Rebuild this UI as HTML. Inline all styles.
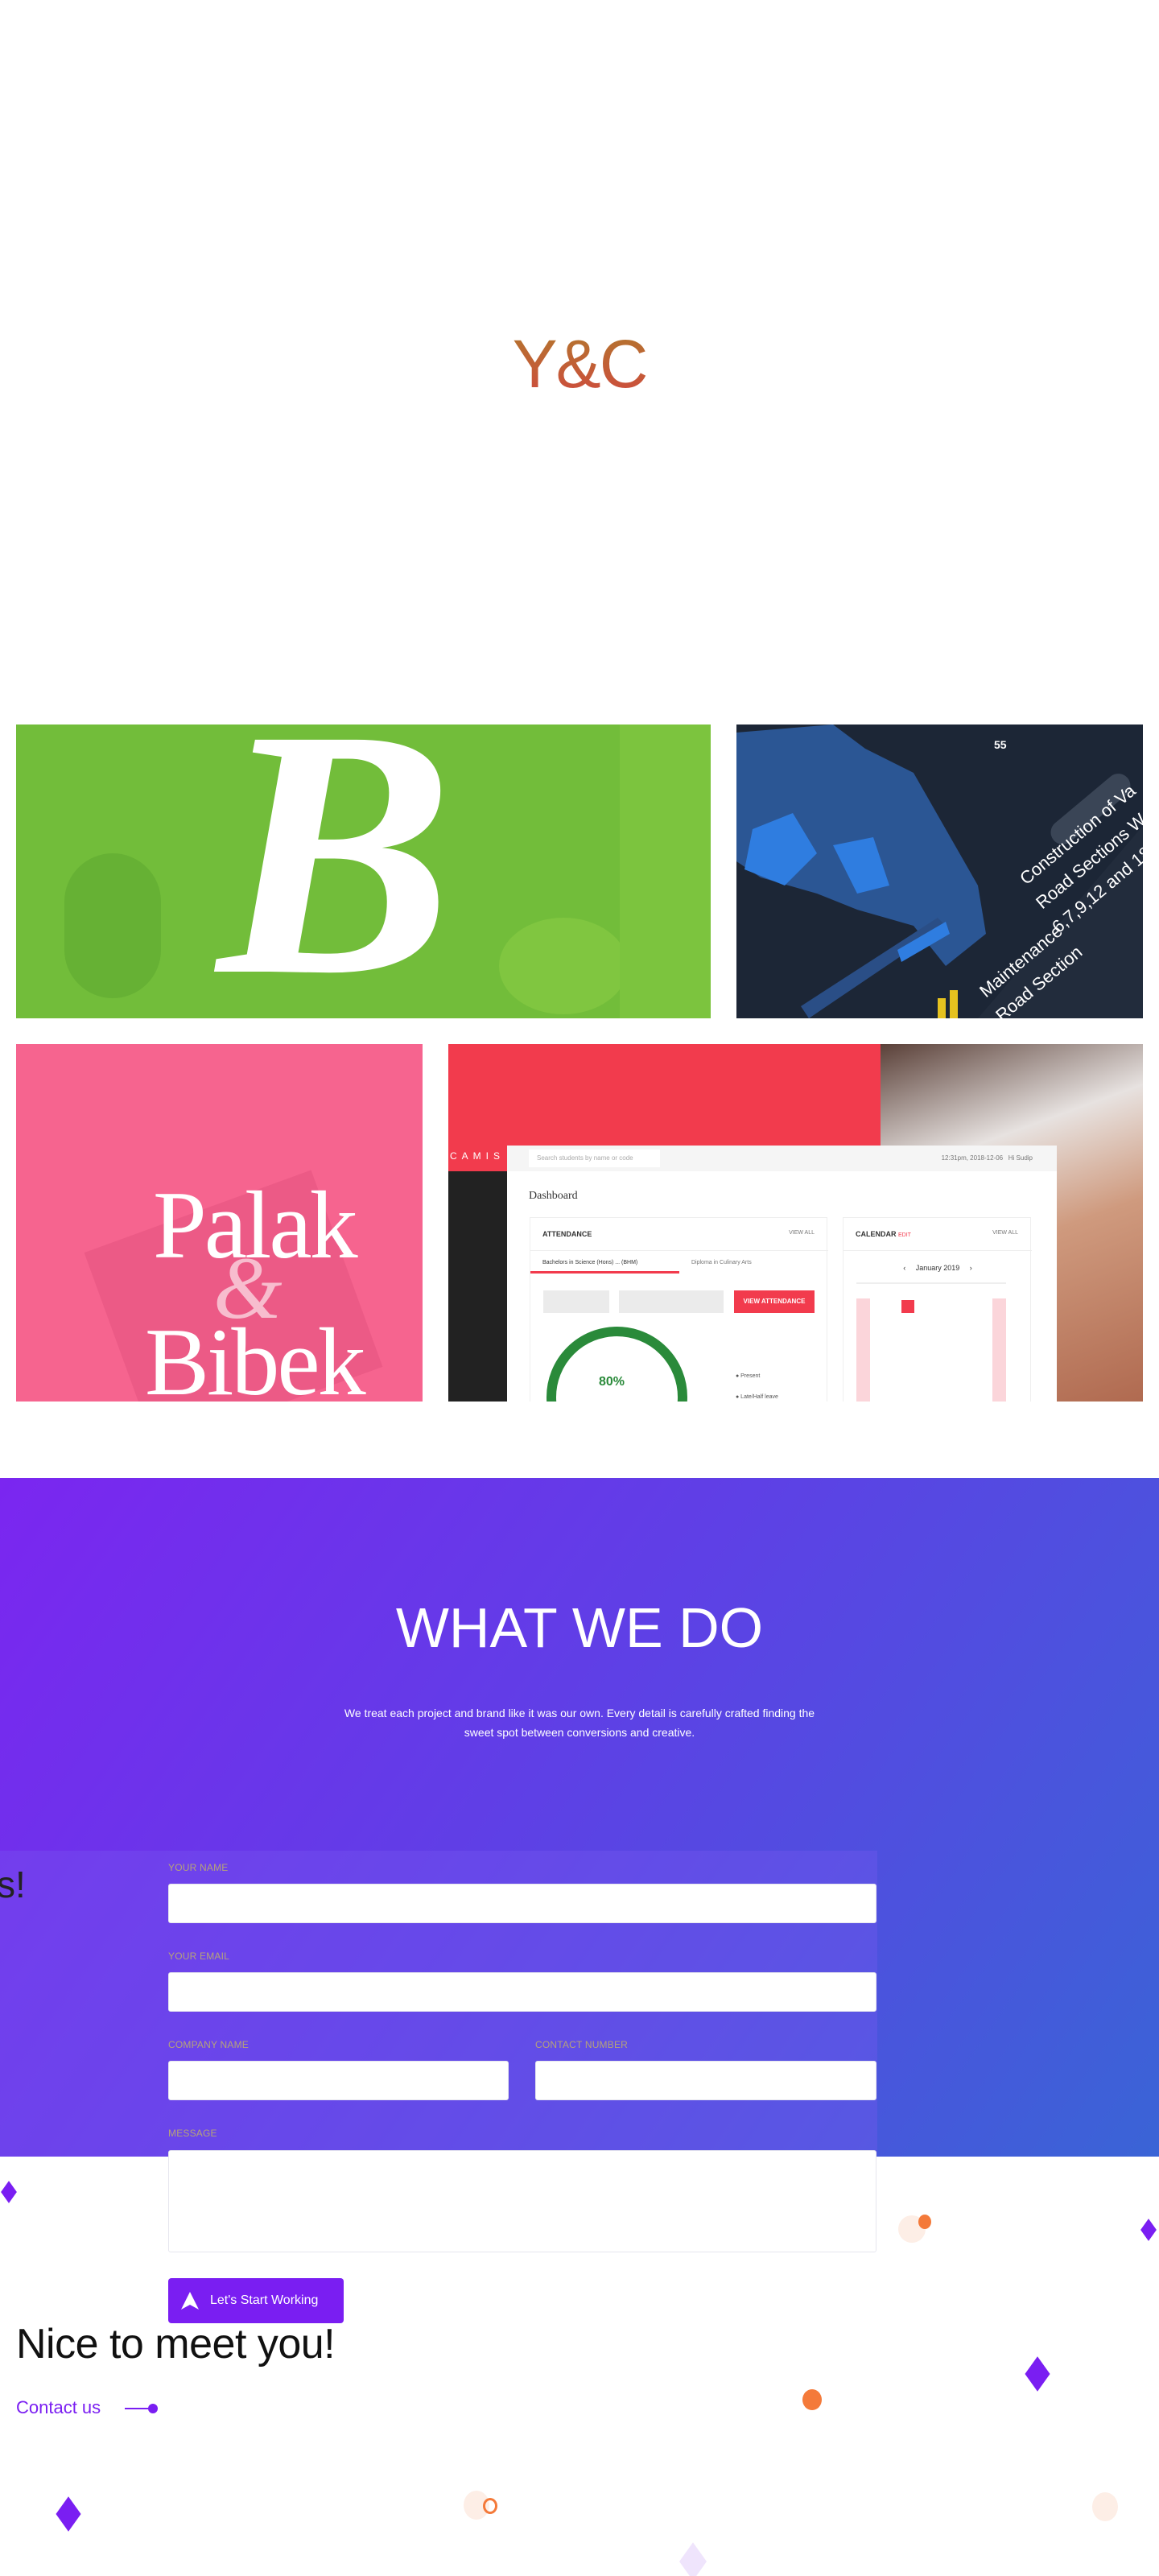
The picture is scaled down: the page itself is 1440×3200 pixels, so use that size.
<!DOCTYPE html>
<html><head><meta charset="utf-8">
<style>
*{margin:0;padding:0;box-sizing:border-box}
html,body{width:1440px;height:3200px;overflow:hidden;background:#fff;font-family:"Liberation Sans",sans-serif;position:relative}
.abs{position:absolute}
.logo{position:absolute;left:0;width:1440px;top:402px;text-align:center;font-size:84px;font-weight:300;letter-spacing:-2px;background:linear-gradient(#b07a2c,#d1473f);-webkit-background-clip:text;background-clip:text;color:transparent;line-height:100px}
.purple{position:absolute;left:0;top:1836px;width:1440px;height:843px;background:linear-gradient(125deg,#7b26f0 0%,#5f3fe6 45%,#3a64d6 100%)}
.lbl{position:absolute;font-size:12px;color:#b6a37a;letter-spacing:.2px}
.inp{position:absolute;background:#fff;border-radius:3px;border:1px solid #e6e6ee}
.dia{position:absolute;background:#7a1ef2;transform:scaleY(1.4) rotate(45deg)}
.dot{position:absolute;border-radius:50%}
</style></head><body>
<div class="logo">Y&amp;C</div>

<div class="abs" style="left:20px;top:900px;width:863px;height:365px;background:#72bd3a;overflow:hidden">
 <div class="abs" style="left:60px;top:160px;width:120px;height:180px;border-radius:60px;background:#66b134"></div>
 <div class="abs" style="left:600px;top:240px;width:160px;height:120px;border-radius:50%;background:#80c640"></div>
 <div class="abs" style="left:750px;top:0;width:113px;height:365px;background:#7cc43e"></div>
 <div class="abs" style="left:250px;top:-60px;font-family:'Liberation Serif',serif;font-style:italic;font-weight:bold;font-size:440px;color:#fff;line-height:440px">B</div>
</div>
<div class="abs" style="left:915px;top:900px;width:505px;height:365px;background:#1c2636;overflow:hidden">
 <svg width="505" height="365" class="abs" style="left:0;top:0">
  <polygon points="0,10 120,0 160,30 220,60 260,130 300,200 310,260 260,300 220,250 150,230 100,210 30,190 0,170" fill="#2b5694"/>
  <polygon points="20,130 70,110 100,160 60,200 10,180" fill="#2f7de0"/>
  <polygon points="120,150 170,140 190,200 150,210" fill="#2f7de0"/>
  <polygon points="80,350 250,240 260,250 90,365" fill="#2a4e86"/>
  <polygon points="200,280 260,245 265,260 205,295" fill="#2f7de0"/>
  <polygon points="300,365 510,120 510,365" fill="#222c3c"/>
  <rect x="380" y="90" width="120" height="30" rx="15" fill="#3a4556" transform="rotate(-40 440 105)"/>
  <text x="360" y="200" fill="#fff" font-size="22" font-family="Liberation Sans" transform="rotate(-40 360 200)">Construction of Va</text>
  <text x="380" y="230" fill="#fff" font-size="22" font-family="Liberation Sans" transform="rotate(-40 380 230)">Road Sections W</text>
  <text x="400" y="260" fill="#fff" font-size="22" font-family="Liberation Sans" transform="rotate(-40 400 260)">6,7,9,12 and 18</text>
  <text x="310" y="340" fill="#fff" font-size="22" font-family="Liberation Sans" transform="rotate(-40 310 340)">Maintenance</text>
  <text x="330" y="370" fill="#fff" font-size="22" font-family="Liberation Sans" transform="rotate(-40 330 370)">Road Section</text>
  <rect x="250" y="340" width="10" height="30" fill="#e6c21f"/><rect x="265" y="330" width="10" height="40" fill="#e6c21f"/>
  <text x="320" y="30" fill="#fff" font-size="14" font-family="Liberation Sans" font-weight="bold">55</text>
 </svg>
</div>
<div class="abs" style="left:20px;top:1297px;width:505px;height:444px;background:#f6648f;overflow:hidden">
 <div class="abs" style="left:120px;top:200px;width:300px;height:260px;background:#ec5a86;transform:rotate(-20deg)"></div>
 <div class="abs" style="left:170px;top:160px;font-family:'Liberation Serif',serif;font-size:120px;color:#fff;line-height:130px;letter-spacing:-3px">Palak</div>
 <div class="abs" style="left:245px;top:240px;font-family:'Liberation Serif',serif;font-style:italic;font-size:110px;color:rgba(255,255,255,.6)">&amp;</div>
 <div class="abs" style="left:160px;top:330px;font-family:'Liberation Serif',serif;font-size:120px;color:#fff;line-height:130px;letter-spacing:-3px">Bibek</div>
</div>
<div class="abs" style="left:557px;top:1297px;width:863px;height:444px;background:#f23b4d;overflow:hidden">
 <div class="abs" style="left:537px;top:0;width:326px;height:444px;background:linear-gradient(160deg,#5a4038 0%,#e7e2e0 30%,#cf9a7e 55%,#b06a50 100%)"></div>
 <div class="abs" style="left:0;top:158px;width:73px;height:286px;background:#222"></div>
 <div class="abs" style="left:2px;top:132px;color:#fff;font-size:12px;letter-spacing:6px">CAMIS</div>
 <div class="abs" style="left:73px;top:126px;width:683px;height:330px;background:#fff">
  <div style="height:32px;background:#f5f5f5;position:relative">
   <div class="abs" style="left:27px;top:5px;width:163px;height:22px;background:#fff;font-size:8px;color:#aaa;padding:6px 10px">Search students by name or code</div>
   <div class="abs" style="right:30px;top:11px;font-size:8px;color:#777">12:31pm, 2018-12-06 &nbsp; Hi Sudip</div>
  </div>
  <div class="abs" style="left:27px;top:55px;font-family:'Liberation Serif',serif;font-size:14px;color:#333">Dashboard</div>
  <div class="abs" style="left:28px;top:89px;width:370px;height:260px;border:1px solid #eee">
   <div class="abs" style="left:15px;top:15px;font-size:9px;font-weight:bold;color:#333">ATTENDANCE</div>
   <div class="abs" style="right:15px;top:15px;font-size:7px;color:#777">VIEW ALL</div>
   <div class="abs" style="left:0;top:40px;width:370px;border-top:1px solid #eee"></div>
   <div class="abs" style="left:15px;top:52px;font-size:7px;color:#333">Bachelors in Science (Hons) ... (BHM)</div>
   <div class="abs" style="left:200px;top:52px;font-size:7px;color:#777">Diploma in Culinary Arts</div>
   <div class="abs" style="left:0;top:66px;width:185px;height:3px;background:#f23b4d"></div>
   <div class="abs" style="left:16px;top:90px;width:82px;height:28px;background:#ebebeb"></div>
   <div class="abs" style="left:110px;top:90px;width:130px;height:28px;background:#ebebeb"></div>
   <div class="abs" style="left:253px;top:90px;width:100px;height:28px;background:#f23b4d;color:#fff;font-size:8px;font-weight:bold;text-align:center;line-height:28px">VIEW ATTENDANCE</div>
   <div class="abs" style="left:20px;top:135px;width:175px;height:175px;border:12px solid #2a8a3a;border-radius:50%"></div>
   <div class="abs" style="left:85px;top:195px;font-size:16px;font-weight:bold;color:#2a8a3a">80%</div>
   <div class="abs" style="left:255px;top:193px;font-size:7px;color:#555">● Present</div>
   <div class="abs" style="left:255px;top:219px;font-size:7px;color:#555">● Late/Half leave</div>
  </div>
  <div class="abs" style="left:417px;top:89px;width:234px;height:260px;border:1px solid #eee">
   <div class="abs" style="left:15px;top:15px;font-size:9px;font-weight:bold;color:#333">CALENDAR <span style="color:#f23b4d;font-weight:normal;font-size:7px">EDIT</span></div>
   <div class="abs" style="right:15px;top:15px;font-size:7px;color:#777">VIEW ALL</div>
   <div class="abs" style="left:0;top:40px;width:234px;border-top:1px solid #eee"></div>
   <div class="abs" style="left:0;width:234px;top:57px;text-align:center;font-size:9px;color:#333">‹ &nbsp;&nbsp;&nbsp; January 2019 &nbsp;&nbsp;&nbsp; ›</div>
   <div class="abs" style="left:16px;top:100px;width:17px;height:170px;background:#fbd5da"></div>
   <div class="abs" style="left:185px;top:100px;width:17px;height:170px;background:#fbd5da"></div>
   <div class="abs" style="left:72px;top:102px;width:16px;height:16px;background:#f23b4d"></div>
   <div class="abs" style="left:16px;top:80px;width:186px;border-top:2px solid #eee"></div>
  </div>
 </div>
</div>

<div class="purple"></div>
<div class="abs" style="left:0;width:1440px;top:1982px;text-align:center;color:#fff;font-size:70px;font-weight:300;letter-spacing:0;line-height:80px">WHAT WE DO</div>
<div class="abs" style="left:370px;width:700px;top:2116px;text-align:center;color:#fff;font-size:14px;line-height:24px">We treat each project and brand like it was our own. Every detail is carefully crafted finding the<br>sweet spot between conversions and creative.</div>

<div class="abs" style="left:0;top:2299px;width:1090px;height:380px;background:rgba(120,90,240,.35)"></div>
<div class="abs" style="left:-4px;top:2314px;font-size:46px;color:#222;font-weight:300">s!</div>

<div class="lbl" style="left:209px;top:2313px">YOUR NAME</div>
<div class="inp" style="left:209px;top:2340px;width:880px;height:49px"></div>
<div class="lbl" style="left:209px;top:2423px">YOUR EMAIL</div>
<div class="inp" style="left:209px;top:2450px;width:880px;height:49px"></div>
<div class="lbl" style="left:209px;top:2533px">COMPANY NAME</div>
<div class="inp" style="left:209px;top:2560px;width:423px;height:49px"></div>
<div class="lbl" style="left:665px;top:2533px">CONTACT NUMBER</div>
<div class="inp" style="left:665px;top:2560px;width:424px;height:49px"></div>
<div class="lbl" style="left:209px;top:2643px">MESSAGE</div>
<div class="inp" style="left:209px;top:2671px;width:880px;height:127px"></div>
<div class="abs" style="left:209px;top:2830px;width:218px;height:56px;background:#7a1ef2;border-radius:4px;color:#fff;font-size:16px;line-height:56px;padding-left:52px">Let's Start Working</div>
<svg class="abs" style="left:223px;top:2845px" width="26" height="26"><polygon points="13,2 24,24 13,18 2,24" fill="#fff"/></svg>

<div class="abs" style="left:20px;top:2882px;font-size:52px;color:#111;font-weight:300;line-height:60px;letter-spacing:-.5px">Nice to meet you!</div>
<div class="abs" style="left:20px;top:2978px;font-size:22px;color:#7a1ef2">Contact us</div>
<div class="abs" style="left:155px;top:2991px;width:35px;height:2px;background:#7a1ef2"></div>
<div class="dot" style="left:184px;top:2986px;width:12px;height:12px;background:#7a1ef2"></div>

<div class="dia" style="left:4px;top:2716px;width:14px;height:14px"></div>
<div class="dia" style="left:1420px;top:2763px;width:14px;height:14px"></div>
<div class="dia" style="left:1278px;top:2938px;width:22px;height:22px"></div>
<div class="dia" style="left:74px;top:3112px;width:22px;height:22px"></div>
<div class="dia" style="left:849px;top:3170px;width:24px;height:24px;background:#efe4fc"></div>
<div class="dot" style="left:1116px;top:2752px;width:34px;height:34px;background:#fdeee6"></div>
<div class="dot" style="left:1141px;top:2751px;width:16px;height:18px;background:#f47a3a"></div>
<div class="dot" style="left:997px;top:2968px;width:24px;height:26px;background:#f47a3a"></div>
<div class="dot" style="left:576px;top:3094px;width:32px;height:36px;background:#fdeee6"></div>
<div class="dot" style="left:600px;top:3103px;width:18px;height:20px;border:3px solid #f47a3a"></div>
<div class="dot" style="left:1357px;top:3096px;width:32px;height:36px;background:#fdeee6"></div>
</body></html>
